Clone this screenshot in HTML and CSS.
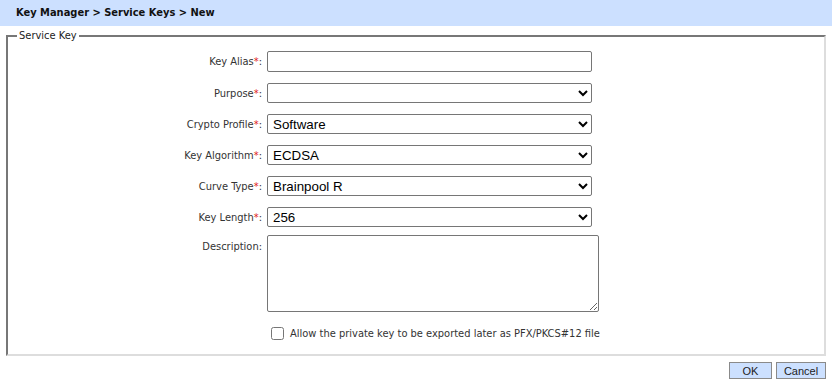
FILE: index.html
```html
<!DOCTYPE html>
<html lang="en">
<head>
    <meta charset="UTF-8">
    <title>Service Keys - New</title>
    <link rel="stylesheet" href="styles.css">
</head>
<body>
    <div class="breadcrumb">Key Manager &gt; Service Keys &gt; New</div>
    <fieldset class="panel">
        <legend>Service Key</legend>
        <div class="form">
            <label class="form_label" for="alias">Key Alias<span class="req">*</span>:</label>
            <div class="form_field"><input id="alias" class="form_input" type="text"></div>

            <label class="form_label" for="purpose">Purpose<span class="req">*</span>:</label>
            <div class="form_field"><select id="purpose" class="form_select"><option></option></select></div>

            <label class="form_label" for="profile">Crypto Profile<span class="req">*</span>:</label>
            <div class="form_field"><select id="profile" class="form_select"><option>Software</option></select></div>

            <label class="form_label" for="algo">Key Algorithm<span class="req">*</span>:</label>
            <div class="form_field"><select id="algo" class="form_select"><option>ECDSA</option></select></div>

            <label class="form_label" for="curve">Curve Type<span class="req">*</span>:</label>
            <div class="form_field"><select id="curve" class="form_select"><option>Brainpool R</option></select></div>

            <label class="form_label" for="length">Key Length<span class="req">*</span>:</label>
            <div class="form_field"><select id="length" class="form_select"><option>256</option></select></div>

            <label class="form_label form_label--top" for="desc">Description:</label>
            <div class="form_field"><textarea id="desc" class="form_textarea"></textarea></div>

            <div></div>
            <label class="form_check"><input type="checkbox"> Allow the private key to be exported later as PFX/PKCS#12 file</label>
        </div>
    </fieldset>
    <div class="actions">
        <button class="btn btn--ok">OK</button>
        <button class="btn">Cancel</button>
    </div>
</body>
</html>
```

FILE: styles.css
```css
body {
    margin: 0;
    font-family: "DejaVu Sans", Verdana, sans-serif;
    font-stretch: condensed;
    font-size: 11px;
    color: #222;
    background: #fff;
}
.breadcrumb {
    height: 26px;
    line-height: 26px;
    padding-left: 16px;
    background-color: #cce0ff;
    font-weight: bold;
    font-size: 11px;
    color: #111;
}
.panel {
    margin: 3px 6px 0 6px;
    padding: 9px 0 14px 0;
    border-color: #777 #ddd #ddd #777;
    border-width: 2px;
    border-style: solid;
    min-width: 0;
}
.panel legend {
    margin-left: 9px;
    padding: 0 2px;
    line-height: 13px;
    color: #222;
}
.form {
    display: grid;
    grid-template-columns: 254px 1fr;
    column-gap: 5px;
    row-gap: 11px;
    align-items: center;
}
.form_label {
    text-align: right;
    color: #333;
}
.form_label--top {
    align-self: start;
    padding-top: 2px;
}
.req {
    color: #e0201a;
}
.form_field {
    display: flex;
}
.form_input,
.form_select,
.form_textarea {
    box-sizing: border-box;
    margin: 0;
    border: 1px solid #767676;
    border-radius: 2px;
    background: #fff;
    font-family: "Liberation Sans", Arial, sans-serif;
    font-size: 13.33px;
    color: #000;
}
.form_input {
    width: 325px;
    height: 21px;
}
.form_select {
    width: 325px;
    height: 20px;
    padding: 0 0 0 1px;
}
.form_textarea {
    width: 332px;
    height: 77px;
    margin-top: -3px;
    resize: both;
}
.form_check {
    display: flex;
    align-items: center;
    gap: 4px;
    margin-top: 4px;
    padding-left: 4px;
    color: #333;
}
.form_check input {
    margin: 0 2px 0 0;
    width: 13px;
    height: 13px;
}
.actions {
    display: flex;
    justify-content: flex-end;
    gap: 4px;
    padding: 6px 6px 0 0;
}
.btn {
    box-sizing: border-box;
    height: 17px;
    width: 50px;
    padding: 0;
    border: 1px solid #8a8a8a;
    background-color: #cce0ff;
    font-family: "Liberation Sans", Arial, sans-serif;
    font-size: 11px;
    color: #222;
}
.btn--ok {
    width: 43px;
}
```
